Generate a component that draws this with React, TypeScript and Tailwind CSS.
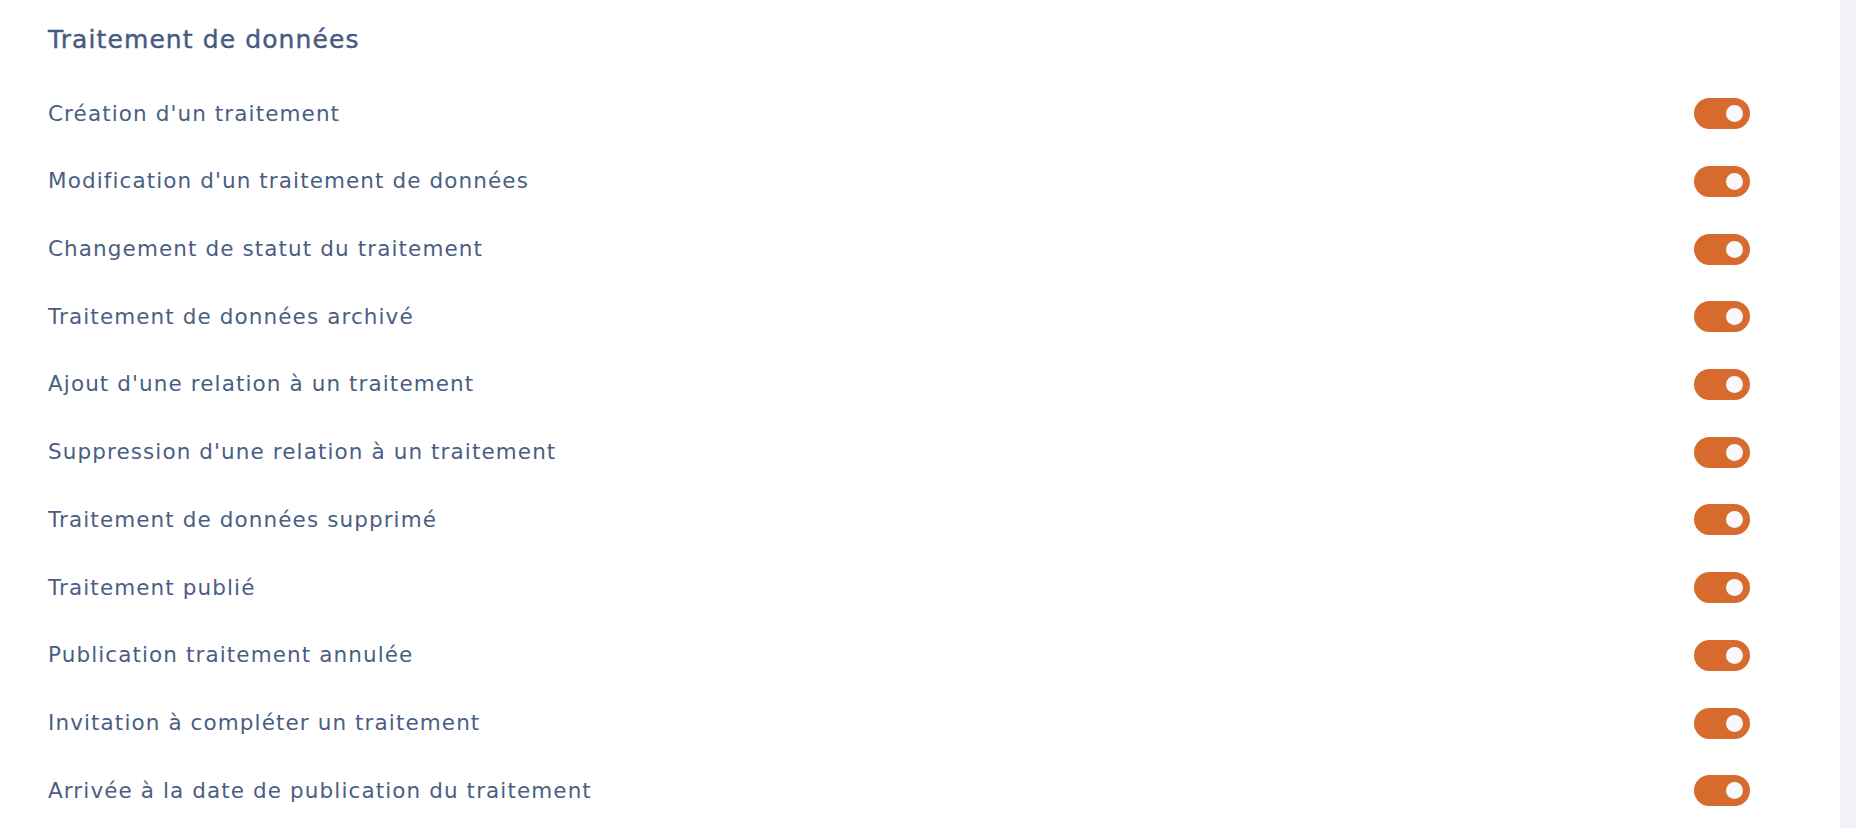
const ITEMS = [
  "Création d'un traitement",
  "Modification d'un traitement de données",
  "Changement de statut du traitement",
  "Traitement de données archivé",
  "Ajout d'une relation à un traitement",
  "Suppression d'une relation à un traitement",
  "Traitement de données supprimé",
  "Traitement publié",
  "Publication traitement annulée",
  "Invitation à compléter un traitement",
  "Arrivée à la date de publication du traitement",
];

function Toggle() {
  return (
    <button
      type="button"
      className="flex h-[31px] w-[56px] shrink-0 items-center justify-end rounded-full bg-[#d66b2d] pr-[7px]"
    >
      <span className="h-[17px] w-[17px] rounded-full bg-[#f8f8fd]" />
    </button>
  );
}

export default function App() {
  return (
    <div className="flex h-[828px] w-full overflow-hidden bg-white font-['DejaVu_Sans',sans-serif]">
      <main className="flex-1 pl-[48px] pr-[90px] pt-[25px]">
        <h2 className="h-[30px] text-[25px] leading-[30px] tracking-[1.1px] text-[#465a80] [-webkit-text-stroke:0.4px_#465a80]">
          Traitement de données
        </h2>
        <ul className="mt-[25px]">
          {ITEMS.map((label) => (
            <li key={label} className="flex h-[67.7px] items-center justify-between">
              <span className="text-[21.5px] tracking-[1.1px] text-[#4a5e84]">{label}</span>
              <Toggle />
            </li>
          ))}
        </ul>
      </main>
      {/* Scroll track */}
      <div className="w-[16px] bg-[#f1f2f7]" />
    </div>
  );
}
